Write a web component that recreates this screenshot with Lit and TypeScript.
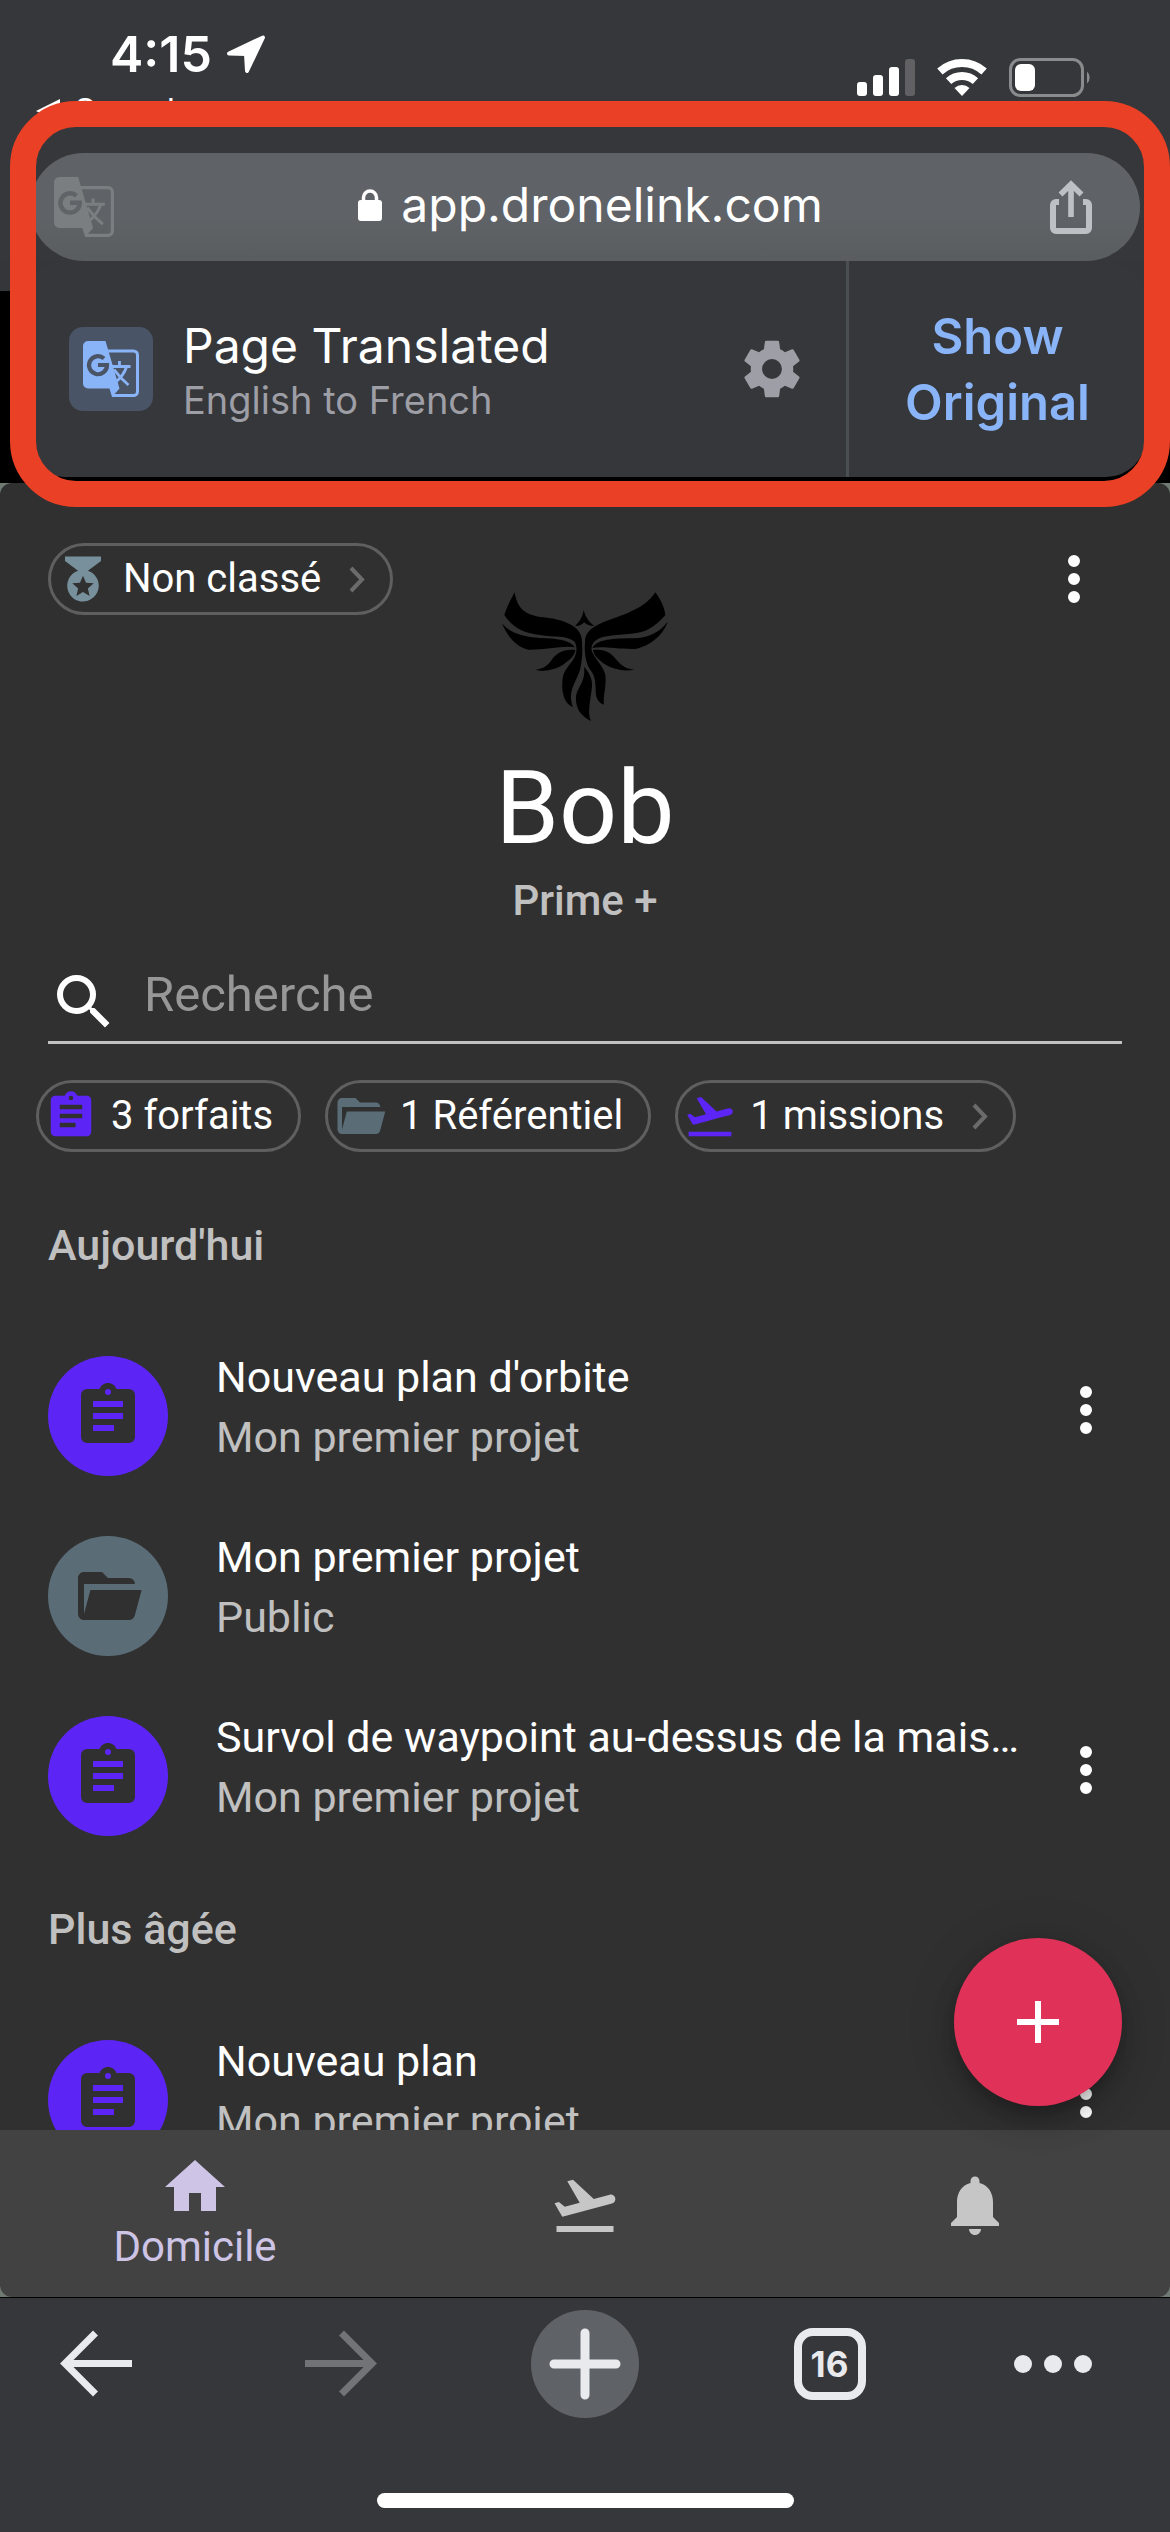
import { LitElement, html, css, svg } from "lit";
import { customElement, property } from "lit/decorators.js";

const ICONS: Record<string, string> = {
  clipboard:
    "M17,9H7V7H17M17,13H7V11H17M14,17H7V15H14M12,3A1,1 0 0,1 13,4A1,1 0 0,1 12,5A1,1 0 0,1 11,4A1,1 0 0,1 12,3M19,3H14.82C14.4,1.84 13.3,1 12,1C10.7,1 9.6,1.84 9.18,3H5A2,2 0 0,0 3,5V19A2,2 0 0,0 5,21H19A2,2 0 0,0 21,19V5A2,2 0 0,0 19,3Z",
  folder:
    "M19,20H4C2.89,20 2,19.1 2,18V6C2,4.89 2.89,4 4,4H10L12,6H19A2,2 0 0,1 21,8H21L4,8V18L6.14,10H23.21L20.93,18.5C20.7,19.37 19.92,20 19,20Z",
  medal:
    "M20,2H4V4L9.81,8.36C6.14,9.57 4.14,13.53 5.35,17.2C6.56,20.87 10.5,22.87 14.19,21.66C17.86,20.45 19.86,16.5 18.65,12.82C17.95,10.71 16.3,9.05 14.19,8.36L20,4V2M14.94,19.5L12,17.78L9.06,19.5L9.84,16.17L7.25,13.93L10.66,13.64L12,10.5L13.34,13.64L16.75,13.93L14.16,16.17L14.94,19.5Z",
  takeoff:
    "M2.5,19H21.5V21H2.5V19M22.07,9.64C21.86,8.84 21.03,8.36 20.23,8.58L14.92,10L8,3.57L6.09,4.08L10.23,11.25L5.26,12.58L3.29,11.04L1.84,11.43L3.66,14.59L4.43,15.92L6.03,15.5L11.34,14.07L15.69,12.91L21,11.5C21.81,11.26 22.28,10.44 22.07,9.64Z",
  home: "M10,20V14H14V20H19V12H22L12,3L2,12H5V20H10Z",
  bell: "M12,22c1.1,0 2,-0.9 2,-2h-4c0,1.1 0.89,2 2,2zM18,16v-5c0,-3.07 -1.64,-5.64 -4.5,-6.32V4c0,-0.83 -0.67,-1.5 -1.5,-1.5s-1.5,0.67 -1.5,1.5v0.68C7.63,5.36 6,7.92 6,11v5l-2,2v1h16v-1l-2,-2z",
  search:
    "M15.5 14h-.79l-.28-.27A6.471 6.471 0 0 0 16 9.5 6.5 6.5 0 1 0 9.5 16c1.61 0 3.09-.59 4.23-1.57l.27.28v.79l5 4.99L20.49 19l-4.99-5zm-6 0C7.01 14 5 11.99 5 9.5S7.01 5 9.5 5 14 7.01 14 9.5 11.99 14 9.5 14z",
  more: "M12,16A2,2 0 0,1 14,18A2,2 0 0,1 12,20A2,2 0 0,1 10,18A2,2 0 0,1 12,16M12,10A2,2 0 0,1 14,12A2,2 0 0,1 12,14A2,2 0 0,1 10,12A2,2 0 0,1 12,10M12,4A2,2 0 0,1 14,6A2,2 0 0,1 12,8A2,2 0 0,1 10,6A2,2 0 0,1 12,4Z",
  plus: "M19,13H13V19H11V13H5V11H11V5H13V11H19V13Z",
  cog: "M12,15.5A3.5,3.5 0 0,1 8.5,12A3.5,3.5 0 0,1 12,8.5A3.5,3.5 0 0,1 15.5,12A3.5,3.5 0 0,1 12,15.5M19.43,12.97C19.47,12.65 19.5,12.33 19.5,12C19.5,11.67 19.47,11.34 19.43,11L21.54,9.37C21.73,9.22 21.78,8.95 21.66,8.73L19.66,5.27C19.54,5.05 19.27,4.96 19.05,5.05L16.56,6.05C16.04,5.66 15.5,5.32 14.87,5.07L14.5,2.42C14.46,2.18 14.25,2 14,2H10C9.75,2 9.54,2.18 9.5,2.42L9.13,5.07C8.5,5.32 7.96,5.66 7.44,6.05L4.95,5.05C4.73,4.96 4.46,5.05 4.34,5.27L2.34,8.73C2.21,8.95 2.27,9.22 2.46,9.37L4.57,11C4.53,11.34 4.5,11.67 4.5,12C4.5,12.33 4.53,12.65 4.57,12.97L2.46,14.63C2.27,14.78 2.21,15.05 2.34,15.27L4.34,18.73C4.46,18.95 4.73,19.03 4.95,18.95L7.44,17.94C7.96,18.34 8.5,18.68 9.13,18.93L9.5,21.58C9.54,21.82 9.75,22 10,22H14C14.25,22 14.46,21.82 14.5,21.58L14.87,18.93C15.5,18.67 16.04,18.34 16.56,17.94L19.05,18.95C19.27,19.03 19.54,18.95 19.66,18.73L21.66,15.27C21.78,15.05 21.73,14.78 21.54,14.63L19.43,12.97Z",
};

const icon = (name: string, cls = "icon") =>
  html`<svg class=${cls} viewBox="0 0 24 24" fill="currentColor" aria-hidden="true"><path d=${ICONS[name]} fill-rule="evenodd"></path></svg>`;

const chevron = html`<svg class="chevron" viewBox="0 0 16 27" aria-hidden="true">
  <path d="M2 2L13 13.5L2 25" fill="none" stroke="currentColor" stroke-width="4"></path>
</svg>`;

const reset = css`
  * { box-sizing: border-box; }
  button { appearance: none; border: 0; margin: 0; padding: 0; background: none; color: inherit; font: inherit; cursor: pointer; }
  svg { display: block; flex: none; }
  a { color: inherit; text-decoration: none; }
  p, h1, h2, ul { margin: 0; padding: 0; }
  ul { list-style: none; }
`;

@customElement("translate-icon")
export class TranslateIcon extends LitElement {
  static styles = css`
    :host { display: block; flex: none; }
    svg { display: block; width: 100%; height: 100%; }
    .cut { stroke: var(--cut, #4a5467); }
  `;
  render() {
    return html`<svg viewBox="0 0 56 56" fill="none" stroke="currentColor" aria-hidden="true">
      <path d="M24 10H50.5A4 4 0 0 1 54.5 14V50.5A4 4 0 0 1 50.5 54.5H29" stroke-width="3"></path>
      <path d="M5 0H22.5L36.5 47.5L29 56L26.5 47.5H5A5 5 0 0 1 0 42.5V5A5 5 0 0 1 5 0Z" fill="currentColor" stroke="none"></path>
      <path d="M36.5 20V25.500M29 25.500H47.500M43.500 26C41.500 32 38 36.500 33 41M31 28.500C35 34 40 39.500 45.500 44" stroke-width="2.800"></path>
      <path class="cut" d="M21 17.500A9 9 0 1 0 24 24H15" stroke-width="4.200"></path>
    </svg>`;
  }
}

@customElement("status-bar")
export class StatusBar extends LitElement {
  static styles = [
    reset,
    css`
      :host { display: flex; justify-content: space-between; padding: 24px 79px 0 36px; color: #fff; }
      .clock { display: flex; align-items: center; gap: 14px; padding-left: 74px; font-size: 50px; line-height: 60px; font-weight: 600; }
      .back { display: flex; align-items: center; gap: 14px; margin-top: 7px; font-size: 34px; line-height: 40px; }
      .signals { display: flex; align-items: center; align-self: flex-start; gap: 22px; padding-top: 34px; }
      .arrow { width: 40px; height: 38px; }
      .tri { width: 24px; height: 24px; }
      .bars { width: 58px; height: 38px; }
      .wifi { width: 50px; height: 38px; }
      .battery { width: 82px; height: 39px; }
    `,
  ];
  render() {
    return html`
      <div>
        <div class="clock">
          <span>4:15</span>
          <svg class="arrow" viewBox="0 0 40 38" fill="#fff" stroke="#fff" stroke-width="4" stroke-linejoin="round" aria-hidden="true">
            <path d="M3 18.500L37 2.500L21 36L20 19Z"></path>
          </svg>
        </div>
        <a class="back" href="#search">
          <svg class="tri" viewBox="0 0 24 24" fill="#fff" aria-hidden="true"><path d="M24 0V24L0 12Z"></path></svg>
          <span>Search</span>
        </a>
      </div>
      <div class="signals">
        <svg class="bars" viewBox="0 0 58 38" fill="#fff" aria-hidden="true">
          <rect x="0" y="23" width="10" height="14" rx="3"></rect>
          <rect x="16" y="16" width="10" height="21" rx="3"></rect>
          <rect x="32" y="8" width="10" height="29" rx="3"></rect>
          <rect x="48" y="0" width="10" height="37" rx="3" fill="#616163"></rect>
        </svg>
        <svg class="wifi" viewBox="0 0 50 38" fill="none" stroke="#fff" stroke-width="8" aria-hidden="true">
          <path d="M2.900 12.500A33 33 0 0 1 47.100 12.500M11.600 22.100A20 20 0 0 1 38.400 22.100"></path>
          <path d="M25 37L17.500 29A11 11 0 0 1 32.500 29Z" fill="#fff" stroke="none"></path>
        </svg>
        <svg class="battery" viewBox="0 0 82 39" fill="none" aria-hidden="true">
          <rect x="1.500" y="1.500" width="72" height="36" rx="10" stroke="#8a8b8c" stroke-width="3"></rect>
          <rect x="6" y="6" width="20" height="27" rx="6" fill="#fff"></rect>
          <path d="M78 13.500A8 8 0 0 1 78 25.500Z" fill="#8a8b8c"></path>
        </svg>
      </div>
    `;
  }
}

@customElement("browser-header")
export class BrowserHeader extends LitElement {
  static styles = [
    reset,
    css`
      :host { display: block; position: relative; background: #36373a; color: #fff; }
      .omnibox { display: flex; align-items: center; height: 108px; margin: 22px 30px 0; padding: 0 48px 0 24px; border-radius: 54px; background: linear-gradient(#5f6367 60%, #595d5f); }
      .translate { width: 60px; height: 60px; color: #7b7e81; --cut: #606468; }
      .address { display: flex; flex: 1; align-items: center; justify-content: center; gap: 18px; padding: 0 0 4px 16px; font-size: 48px; line-height: 60px; }
      .lock { width: 26px; height: 32px; }
      .share { width: 42px; height: 54px; color: #bdc1c6; }
      .dock { padding: 0 24px 6px; background: linear-gradient(#343639 30px, #000 30px); }
      .banner { display: flex; height: 216px; border-radius: 40px; background: #36373a; }
      .info { display: flex; flex: 1; align-items: center; padding: 0 40px 0 45px; }
      .tile { display: flex; align-items: center; justify-content: center; width: 84px; height: 84px; border-radius: 14px; background: #4a5467; }
      .blue { width: 56px; height: 56px; color: #8ab4f8; }
      .words { flex: 1; padding: 2px 0 0 30px; }
      .title { font-size: 48px; line-height: 60px; }
      .sub { font-size: 38px; line-height: 48px; color: #9e9ea6; }
      .cog { width: 68px; height: 68px; color: #9e9ea6; }
      .original { width: 300px; padding: 2px 40px 0; border-left: 3px solid #4a4f51; font-size: 49px; line-height: 66px; font-weight: 600; color: #8ab4f8; }
      .marker { position: absolute; z-index: 3; top: 101px; right: 0; bottom: -24px; left: 10px; border: 26px solid #ea4025; border-radius: 66px; pointer-events: none; }
    `,
  ];
  render() {
    return html`
      <status-bar></status-bar>
      <div class="omnibox">
        <translate-icon class="translate"></translate-icon>
        <div class="address">
          <svg class="lock" viewBox="0 0 26 32" aria-hidden="true">
            <rect x="1" y="11" width="24" height="21" rx="3" fill="#fff"></rect>
            <path d="M6.500 13V8.500A6.500 6.500 0 0 1 19.500 8.500V13" fill="none" stroke="#fff" stroke-width="3.500"></path>
          </svg>
          <span>app.dronelink.com</span>
        </div>
        <button aria-label="Share">
          <svg class="share" viewBox="0 0 42 54" fill="none" stroke="currentColor" stroke-width="6" aria-hidden="true">
            <path d="M9 22H6A3 3 0 0 0 3 25V48A3 3 0 0 0 6 51H36A3 3 0 0 0 39 48V25A3 3 0 0 0 36 22H33"></path>
            <path d="M21 37V5M10.500 14.500L21 4.200L31.500 14.500" stroke-width="5.600"></path>
          </svg>
        </button>
      </div>
      <div class="dock">
        <div class="banner">
          <div class="info">
            <div class="tile"><translate-icon class="blue"></translate-icon></div>
            <div class="words">
              <p class="title">Page Translated</p>
              <p class="sub">English to French</p>
            </div>
            <button aria-label="Translation settings">${icon("cog", "cog")}</button>
          </div>
          <button class="original">Show Original</button>
        </div>
      </div>
      <div class="marker"></div>
    `;
  }
}

@customElement("info-chip")
export class InfoChip extends LitElement {
  @property() icon = "";
  @property() tone = "";
  @property() label = "";
  @property({ type: Boolean }) arrow = false;
  static styles = [
    reset,
    css`
      :host { display: block; }
      .chip { display: flex; align-items: center; height: 72px; padding: 0 25px 0 5px; border: 3px solid #5f5f5f; border-radius: 36px; font-size: 40px; line-height: 48px; color: #fff; white-space: nowrap; }
      .icon { width: 54px; height: 54px; }
      .violet { color: #5d25f5; }
      .slate { color: #5a6d77; }
      .steel { color: #78909c; }
      .label { padding-left: 13px; }
      .chevron { width: 16px; height: 27px; margin-left: 28px; color: #6b6b6b; }
    `,
  ];
  render() {
    return html`<button class="chip">
      <span class=${this.tone}>${icon(this.icon)}</span>
      <span class="label">${this.label}</span>
      ${this.arrow ? chevron : null}
    </button>`;
  }
}

interface Entry { title: string; place: string; kind: "clipboard" | "folder"; menu: boolean; }

const TODAY: Entry[] = [
  { title: "Nouveau plan d'orbite", place: "Mon premier projet", kind: "clipboard", menu: true },
  { title: "Mon premier projet", place: "Public", kind: "folder", menu: false },
  { title: "Survol de waypoint au-dessus de la maison", place: "Mon premier projet", kind: "clipboard", menu: true },
];
const OLDER: Entry[] = [
  { title: "Nouveau plan", place: "Mon premier projet", kind: "clipboard", menu: true },
];

const bird = svg`
  <path d="M104 67C112 120 140 137 190 142C250 148 300 168 305 205C308 230 308 262 302 290C297 320 275 345 273 375C272 390 275 400 279 411C250 400 243 360 248 325C252 300 270 285 282 265C292 248 292 225 282 214C262 196 225 202 180 195C130 190 95 170 73 135C80 110 92 90 104 67Z"></path>
  <path d="M526 67C500 110 440 132 395 147C350 163 315 180 315 215C312 250 318 285 335 305C350 325 345 360 349 380C353 392 360 400 372 404C368 380 380 350 376 315C372 290 346 268 336 245C328 220 350 202 385 198C430 192 480 195 510 175C535 160 548 145 556 135C553 110 542 90 526 67Z"></path>
  <path d="M66 160C90 190 130 200 180 204C230 205 270 210 285 232C250 225 200 240 145 239C105 230 80 195 66 160Z"></path>
  <path d="M563 155C540 185 510 203 460 205C400 205 350 208 337 234C370 228 410 238 465 237C510 228 550 195 563 155Z"></path>
  <path d="M286 240C250 236 228 250 215 270C205 285 190 297 167 299C190 307 230 300 255 280C270 268 284 258 286 240Z"></path>
  <path d="M339 240C375 235 395 250 410 270C425 288 440 298 463 298C440 307 395 298 370 280C352 265 341 255 339 240Z"></path>
  <path d="M312 290C330 310 340 330 335 360C330 395 322 430 333 453C305 440 285 415 288 380C292 350 318 335 312 290Z"></path>
  <path d="M311 120C316 140 325 155 343 168C330 168 320 165 313 157C305 165 297 169 285 168C300 155 308 140 311 120Z"></path>`;

@customElement("project-page")
export class ProjectPage extends LitElement {
  static styles = [
    reset,
    css`
      :host { display: block; position: relative; min-height: 0; font-family: Roboto, "Liberation Sans", sans-serif; color: #fff; }
      .scroll { height: 100%; overflow: hidden; border-radius: 12px 12px 0 0; background: #303030; }
      .top { display: grid; grid-template-columns: 1fr auto 1fr; align-items: start; padding: 60px 60px 0 48px; }
      .top .bird { width: 170px; height: 134px; margin: 47px 0 0 12px; }
      .top .menu { justify-self: end; }
      .icon { width: 72px; height: 72px; }
      .name { margin-top: 24px; font-size: 102px; line-height: 120px; font-weight: 400; text-align: center; }
      .plan { margin-top: 3px; font-size: 42px; line-height: 60px; font-weight: 500; text-align: center; color: #c0c0c0; }
      .search { display: flex; align-items: flex-start; gap: 24px; margin: 32px 48px 0; border-bottom: 3px solid #c1c1c1; }
      .search .icon { margin: 3px 0; }
      .field { flex: 1; min-width: 0; height: 64px; padding: 0; border: 0; outline: 0; background: none; color: #fff; font: 400 49px/64px Roboto, sans-serif; }
      .field::placeholder { color: #979797; opacity: 1; }
      .chips { display: flex; gap: 24px; margin: 36px 36px 29px; }
      .section { padding: 34px 48px 50px; font-size: 43px; line-height: 60px; font-weight: 500; color: #c0c0c0; }
      .row { display: flex; align-items: flex-start; height: 180px; padding: 22px 48px; }
      .avatar { display: flex; flex: none; align-items: center; justify-content: center; width: 120px; height: 120px; margin: 9px 48px 0 0; border-radius: 50%; color: #303030; }
      .clipboard { background: #5d25f5; }
      .folder { background: #5a6d77; }
      .lines { flex: 1; min-width: 0; padding-right: 24px; font-size: 43px; line-height: 60px; }
      .lines p { overflow: hidden; white-space: nowrap; text-overflow: ellipsis; }
      .place { color: #c0c0c0; }
      .row .menu { margin-top: 27px; }
      .fab { position: absolute; z-index: 2; right: 48px; bottom: 24px; display: flex; align-items: center; justify-content: center; width: 168px; height: 168px; border-radius: 50%; background: #e03158; color: #fff; box-shadow: 0 9px 15px -3px rgba(0, 0, 0, 0.2), 0 18px 30px rgba(0, 0, 0, 0.14), 0 3px 54px rgba(0, 0, 0, 0.12); }
    `,
  ];
  private rows(entries: Entry[]) {
    return html`<ul>
      ${entries.map(
        (e) => html`<li class="row">
          <div class="avatar ${e.kind}">${icon(e.kind)}</div>
          <div class="lines">
            <p>${e.title}</p>
            <p class="place">${e.place}</p>
          </div>
          ${e.menu ? html`<button class="menu" aria-label="Menu">${icon("more")}</button>` : html`<span class="icon"></span>`}
        </li>`,
      )}
    </ul>`;
  }
  render() {
    return html`
      <div class="scroll">
        <div class="top">
          <div><info-chip icon="medal" tone="steel" label="Non classé" arrow></info-chip></div>
          <svg class="bird" viewBox="60 60 510 402" aria-hidden="true">${bird}</svg>
          <button class="menu" aria-label="Menu">${icon("more")}</button>
        </div>
        <h1 class="name">Bob</h1>
        <p class="plan">Prime +</p>
        <label class="search">
          ${icon("search")}
          <input class="field" type="text" placeholder="Recherche" aria-label="Recherche" />
        </label>
        <div class="chips">
          <info-chip icon="clipboard" tone="violet" label="3 forfaits"></info-chip>
          <info-chip icon="folder" tone="slate" label="1 Référentiel"></info-chip>
          <info-chip icon="takeoff" tone="violet" label="1 missions" arrow></info-chip>
        </div>
        <h2 class="section">Aujourd'hui</h2>
        ${this.rows(TODAY)}
        <h2 class="section">Plus âgée</h2>
        ${this.rows(OLDER)}
      </div>
      <button class="fab" aria-label="Ajouter">${icon("plus")}</button>
    `;
  }
}

@customElement("tab-nav")
export class TabNav extends LitElement {
  static styles = [
    reset,
    css`
      :host { display: block; background: #6f7a72; font-family: Roboto, "Liberation Sans", sans-serif; }
      .tabs { display: grid; grid-template-columns: repeat(3, 1fr); height: 167px; border-radius: 0 0 12px 12px; background: #424242; }
      .tab { display: flex; flex-direction: column; align-items: center; padding-top: 39px; color: #c6c6c6; font-size: 42px; line-height: 48px; }
      .active { padding-top: 21px; color: #cdc4e6; }
      .icon { width: 72px; height: 72px; }
    `,
  ];
  render() {
    return html`<nav class="tabs">
      <a class="tab active" href="#home">${icon("home")}<span>Domicile</span></a>
      <a class="tab" href="#missions" aria-label="Missions">${icon("takeoff")}</a>
      <a class="tab" href="#alerts" aria-label="Notifications">${icon("bell")}</a>
    </nav>`;
  }
}

@customElement("browser-toolbar")
export class BrowserToolbar extends LitElement {
  static styles = [
    reset,
    css`
      :host { display: block; padding-bottom: 24px; border-top: 1px solid #000; background: #36373b; color: #e8eaed; }
      .tools { display: flex; align-items: center; justify-content: space-between; height: 132px; padding: 0 60px; }
      .glyph { width: 72px; height: 72px; }
      .dim { color: #727376; }
      .new { display: flex; align-items: center; justify-content: center; width: 108px; height: 108px; margin: 0 -18px; border-radius: 50%; background: #5f6368; }
      .count { width: 72px; height: 72px; border: 8px solid #e8eaed; border-radius: 19px; font-size: 35px; line-height: 56px; font-weight: 700; }
      .dots { width: 96px; height: 72px; margin-left: -24px; }
      .pill { width: 417px; height: 15px; margin: 63px auto 0; border-radius: 8px; background: #fff; }
    `,
  ];
  render() {
    return html`
      <div class="tools">
        <button aria-label="Back">
          <svg class="glyph" viewBox="0 0 72 72" fill="none" stroke="currentColor" stroke-width="7" aria-hidden="true">
            <path d="M72 35.500H6M35.500 5L5 35.500L35.500 66"></path>
          </svg>
        </button>
        <button class="dim" aria-label="Forward">
          <svg class="glyph" viewBox="0 0 72 72" fill="none" stroke="currentColor" stroke-width="7" aria-hidden="true">
            <path d="M0 35.500H66M36.500 5L67 35.500L36.500 66"></path>
          </svg>
        </button>
        <button class="new" aria-label="New tab">
          <svg class="glyph" viewBox="0 0 72 72" stroke="currentColor" stroke-width="9" stroke-linecap="round" aria-hidden="true">
            <path d="M36 5V67M5 36H67"></path>
          </svg>
        </button>
        <button class="count" aria-label="16 tabs">16</button>
        <button aria-label="More">
          <svg class="dots" viewBox="0 0 96 72" fill="currentColor" aria-hidden="true">
            <circle cx="9" cy="36" r="9"></circle><circle cx="39" cy="36" r="9"></circle><circle cx="69" cy="36" r="9"></circle>
          </svg>
        </button>
      </div>
      <div class="pill"></div>
    `;
  }
}

@customElement("app-root")
export class AppRoot extends LitElement {
  static styles = css`
    :host { display: grid; grid-template-columns: minmax(0, 1fr); grid-template-rows: auto 1fr auto auto; height: 100vh; background: #6f7a72; font-family: Inter, "Liberation Sans", sans-serif; }
  `;
  render() {
    return html`
      <browser-header></browser-header>
      <project-page></project-page>
      <tab-nav></tab-nav>
      <browser-toolbar></browser-toolbar>
    `;
  }
}
